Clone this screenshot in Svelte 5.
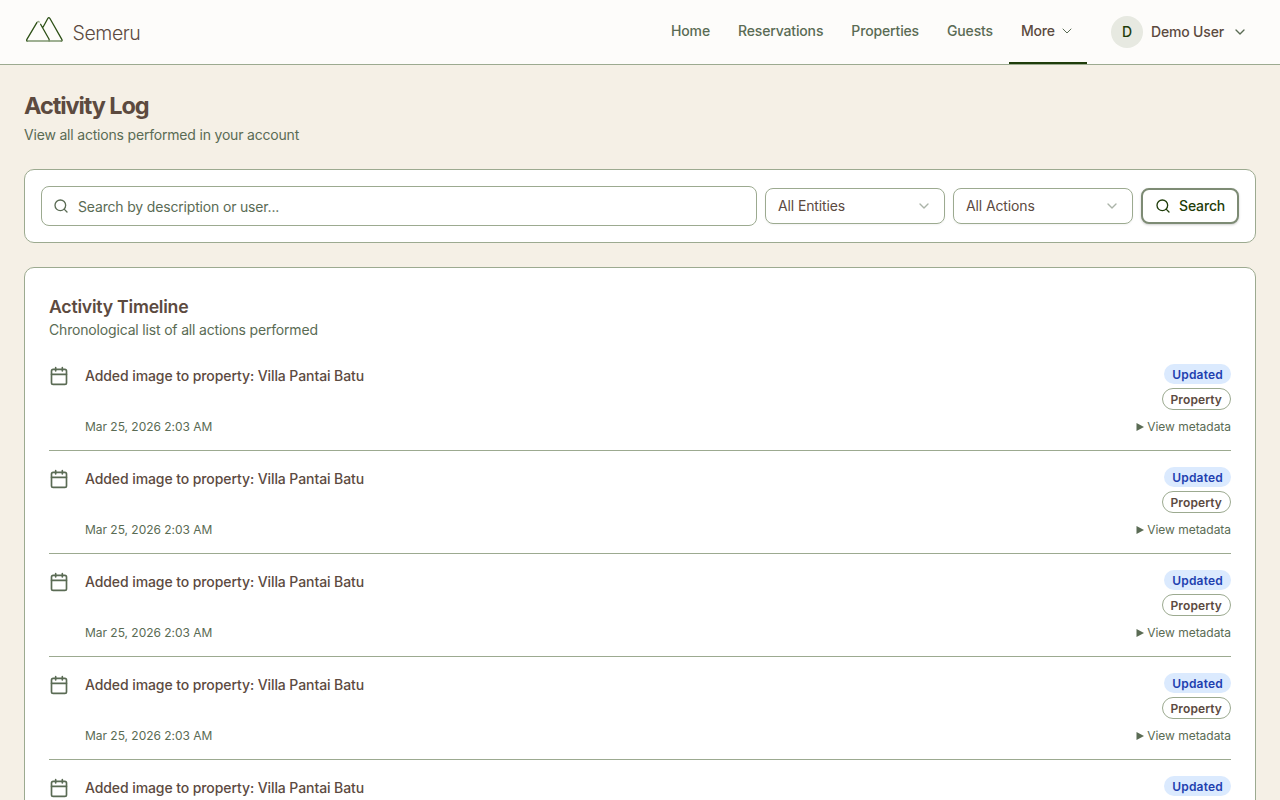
<script>
  const links = ['Home', 'Reservations', 'Properties', 'Guests'];
  const filters = ['All Entities', 'All Actions'];
  const activities = Array.from({ length: 5 }, (_, id) => ({
    id,
    title: 'Added image to property: Villa Pantai Batu',
    date: 'Mar 25, 2026 2:03 AM',
    action: 'Updated',
    entity: 'Property'
  }));
</script>

{#snippet chevron()}
  <svg class="chevron" width="16" height="16" viewBox="0 0 24 24"><path d="m6 9 6 6 6-6" /></svg>
{/snippet}

{#snippet magnifier()}
  <svg width="16" height="16" viewBox="0 0 24 24"><circle cx="11" cy="11" r="8" /><path d="m21 21-4.3-4.3" /></svg>
{/snippet}

<div class="page">
  <header>
    <div class="brand">
      <svg class="logo" width="40" height="28" viewBox="0 0 40 28">
        <path d="M12.7 6.8 2.9 23.4Q2.1 25 3.5 25.2M16.6 8.2 25.1 23.3V25M19 11.3 23.9 2.3Q24.8 .8 25.8 2.3L37.8 23.4Q38.6 25 37.2 25.2" />
        <path d="M12.7 6.8Q14 4.7 15.2 6" opacity=".5" />
        <path class="base" d="M3.4 25H37.2" />
      </svg>
      <span>Semeru</span>
    </div>
    <nav>
      {#each links as link}<a href="#top">{link}</a>{/each}
      <a class="active" href="#top">More {@render chevron()}</a>
    </nav>
    <div class="user">
      <span class="avatar">D</span>
      <span class="name">Demo User</span>
      {@render chevron()}
    </div>
  </header>

  <main>
    <h1>Activity Log</h1>
    <p class="lead">View all actions performed in your account</p>

    <section class="card filters">
      <div class="field">{@render magnifier()}<span>Search by description or user...</span></div>
      {#each filters as filter}
        <div class="select"><span>{filter}</span>{@render chevron()}</div>
      {/each}
      <button>{@render magnifier()}Search</button>
    </section>

    <section class="card timeline">
      <h2>Activity Timeline</h2>
      <p class="sub">Chronological list of all actions performed</p>
      <ul>
        {#each activities as item (item.id)}
          <li>
            <svg class="calendar" width="20" height="20" viewBox="0 0 24 24"><path d="M8 2v4M16 2v4M3 10h18" /><rect x="3" y="4" width="18" height="18" rx="2" /></svg>
            <div class="body">
              <div class="top">
                <p>{item.title}</p>
                <div class="badges">
                  <span class="badge action">{item.action}</span>
                  <span class="badge entity">{item.entity}</span>
                </div>
              </div>
              <div class="meta">
                <span>{item.date}</span>
                <span class="details"><svg width="8" height="8" viewBox="0 0 8 8"><path d="M.5 0 8 4 .5 8Z" /></svg>View metadata</span>
              </div>
            </div>
          </li>
        {/each}
      </ul>
    </section>
  </main>
</div>

<style>
  :global(body) { background: #f5f0e6; overflow: hidden; }
  .page { height: 800px; overflow: hidden; font: 14px/20px Inter, sans-serif; color: #5c4a3f; background: #f5f0e6; }
  .page :global(*) { box-sizing: border-box; }
  h1, h2, p, ul { margin: 0; padding: 0; }
  svg { flex: none; fill: none; stroke: currentColor; stroke-width: 2; stroke-linecap: round; stroke-linejoin: round; }

  header { display: flex; height: 65px; padding: 0 32px 0 24px; background: #fdfcfa; border-bottom: 1px solid #9caa90; }
  .brand { display: flex; gap: 8px; margin-right: auto; padding-top: 16px; font-size: 19.5px; line-height: 34px; font-weight: 300; letter-spacing: -.42px; }
  .logo { stroke: #2d5016; stroke-width: 1.3; }
  .logo .base { stroke: #7f9670; stroke-width: 1.7; }
  .brand span { margin-left: .5px; }
  nav { display: flex; gap: 4px; letter-spacing: -.15px; }
  nav a { display: flex; align-items: center; gap: 4px; padding: 0 12px; border-bottom: 2px solid transparent; color: #5a6b54; font-weight: 500; text-decoration: none; }
  nav a.active { color: #5c4a3f; border-color: #1f3d0a; }
  .chevron { color: #5a6b54; }
  nav :global(.chevron) { stroke-width: 1.5; }
  .user { display: flex; align-items: center; margin-left: 24px; font-weight: 500; letter-spacing: -.16px; }
  .avatar { width: 32px; height: 32px; border-radius: 50%; background: #e7e9e1; color: #1f3d0a; line-height: 32px; text-align: center; }
  .name { margin: 0 8px; }

  main { padding: 24px; }
  h1 { padding-top: 1px; font-size: 23.5px; line-height: 32px; font-weight: 700; letter-spacing: -1.1px; }
  .lead { margin-top: 3px; color: #5a6b54; letter-spacing: -.19px; }
  .card { background: #fff; border: 1px solid #9caa90; border-radius: 10px; }
  .filters { display: flex; align-items: center; gap: 8px; height: 74px; margin-top: 24px; padding: 16px; }
  .field { display: flex; flex: 1; align-items: center; gap: 9px; height: 40px; padding: 0 11px; border: 1px solid #9caa90; border-radius: 8px; color: #5a6b54; letter-spacing: -.17px; }
  .field span { padding-top: 2px; }
  .select { display: flex; align-items: center; justify-content: space-between; width: 180px; height: 36px; padding: 0 12px; border: 1px solid #9caa90; border-radius: 8px; box-shadow: 0 1px 2px #0000000d; letter-spacing: -.12px; }
  .select :global(.chevron) { opacity: .5; }
  button { display: flex; align-items: center; gap: 8px; width: 98px; height: 36px; padding: 0 12px; border: 2px solid #7d8b74; border-radius: 8px; background: #fff; color: #1f3d0a; font: 500 14px/20px Inter, sans-serif; letter-spacing: -.15px; box-shadow: 0 1px 3px #0000001a, 0 1px 2px #0000001a; }
  .timeline { margin-top: 24px; padding: 24px; }
  h2 { padding-top: 4px; font-size: 17.7px; line-height: 22px; font-weight: 600; letter-spacing: -.24px; }
  .sub { margin-top: 2px; color: #5a6b54; letter-spacing: -.17px; }
  ul { margin-top: 24px; list-style: none; }
  li { display: flex; gap: 16px; margin-bottom: 16px; padding-bottom: 16px; border-bottom: 1px solid #9caa90; }
  .calendar { margin-top: 2px; color: #5a6b54; }
  .body { flex: 1; }
  .top, .meta { display: flex; justify-content: space-between; }
  .top p { padding-top: 2px; font-weight: 500; letter-spacing: -.09px; }
  .badges { display: flex; flex-direction: column; align-items: flex-end; gap: 4px; }
  .badge { padding: 3px 8px 1px; border-radius: 999px; font-size: 12px; line-height: 16px; font-weight: 600; letter-spacing: .1px; }
  .action { background: #dbeafe; color: #1e40af; letter-spacing: .2px; }
  .entity { border: 1px solid #9caa90; }
  .meta { margin-top: 9px; margin-bottom: -1px; color: #5a6b54; font-size: 12px; line-height: 16px; letter-spacing: -.03px; }
  .details { display: flex; align-items: center; gap: 3px; }
  .details svg { margin-top: -1px; fill: currentColor; stroke: none; }
</style>
